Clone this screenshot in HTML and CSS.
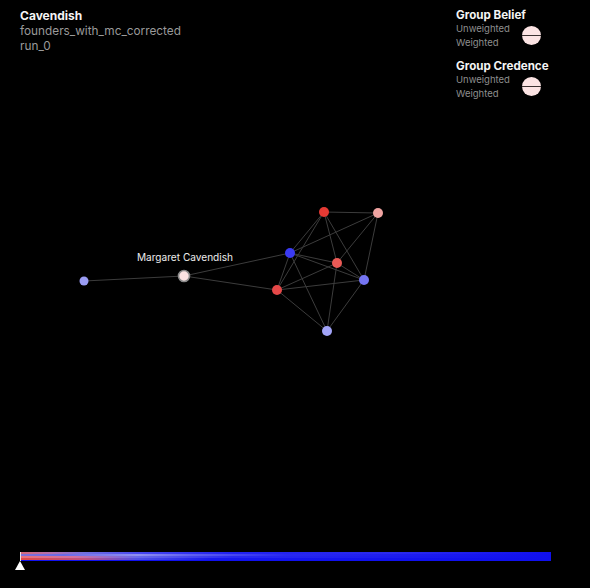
FILE: index.html
```html
<!DOCTYPE html>
<html>
<head>
<meta charset="utf-8">
<link rel="stylesheet" href="styles.css">
</head>
<body>
<div class="page">
  <header class="header">
    <div class="title">
      <div class="name">Cavendish</div>
      <div class="sub">founders_with_mc_corrected</div>
      <div class="sub">run_0</div>
    </div>
    <div class="legend">
      <div class="group">
        <div class="gtitle">Group Belief</div>
        <div class="grow">
          <div class="labels"><div>Unweighted</div><div>Weighted</div></div>
          <div class="pie"></div>
        </div>
      </div>
      <div class="group">
        <div class="gtitle">Group Credence</div>
        <div class="grow">
          <div class="labels"><div>Unweighted</div><div>Weighted</div></div>
          <div class="pie"></div>
        </div>
      </div>
    </div>
  </header>
  <svg class="graph" width="590" height="440" viewBox="0 104 590 440">
    <g class="edges">
      <line x1="184" y1="276" x2="84" y2="281"/>
      <line x1="184" y1="276" x2="290" y2="253"/>
      <line x1="184" y1="276" x2="277" y2="290"/>
      <line x1="324" y1="212" x2="378" y2="213"/>
      <line x1="324" y1="212" x2="290" y2="253"/>
      <line x1="324" y1="212" x2="277" y2="290"/>
      <line x1="324" y1="212" x2="337" y2="263"/>
      <line x1="324" y1="212" x2="364" y2="280"/>
      <line x1="378" y1="213" x2="290" y2="253"/>
      <line x1="378" y1="213" x2="337" y2="263"/>
      <line x1="378" y1="213" x2="364" y2="280"/>
      <line x1="290" y1="253" x2="337" y2="263"/>
      <line x1="290" y1="253" x2="364" y2="280"/>
      <line x1="290" y1="253" x2="277" y2="290"/>
      <line x1="290" y1="253" x2="327" y2="331"/>
      <line x1="337" y1="263" x2="277" y2="290"/>
      <line x1="337" y1="263" x2="364" y2="280"/>
      <line x1="337" y1="263" x2="327" y2="331"/>
      <line x1="277" y1="290" x2="364" y2="280"/>
      <line x1="277" y1="290" x2="327" y2="331"/>
      <line x1="364" y1="280" x2="327" y2="331"/>
    </g>
    <circle cx="84" cy="281" r="4.5" fill="#9a9cf4"/>
    <circle cx="324" cy="212" r="5" fill="#e53a34"/>
    <circle cx="378" cy="213" r="5" fill="#f0a4a2"/>
    <circle cx="290" cy="253" r="5" fill="#3a3af2"/>
    <circle cx="337" cy="263" r="5" fill="#ea5a56"/>
    <circle cx="364" cy="280" r="5" fill="#7474f2"/>
    <circle cx="277" cy="290" r="5" fill="#e54848"/>
    <circle cx="327" cy="331" r="5" fill="#a2a4f8"/>
    <circle cx="184" cy="276" r="5.5" fill="#fbe2e2" stroke="#8a8a8a" stroke-width="1.6"/>
    <text class="label" x="185" y="261" text-anchor="middle">Margaret Cavendish</text>
  </svg>
  <div class="timeline">
    <div class="bar">
      <div class="strip s1"></div>
      <div class="strip s2"></div>
      <div class="strip s3"></div>
      <div class="strip s4"></div>
    </div>
    <div class="marker"></div>
  </div>
</div>
</body>
</html>
```
FILE: styles.css
```css
html, body {
  margin: 0;
  padding: 0;
  background: #000;
}
.page {
  width: 590px;
  height: 588px;
  background: #000;
  font-family: Inter, "Noto Sans", sans-serif;
  color: #fff;
  display: flex;
  flex-direction: column;
  overflow: hidden;
}
.header {
  height: 104px;
  display: flex;
  justify-content: space-between;
  padding: 8px 0 0 20px;
  box-sizing: border-box;
}
.title .name {
  font-size: 12px;
  font-weight: 700;
  line-height: 15px;
  color: #f4f4f4;
}
.title .sub {
  font-size: 11.8px;
  line-height: 15px;
  color: #9a9a9a;
}
.title .name + .sub {
  margin-top: 1px;
}
.legend {
  width: 134px;
  display: flex;
  flex-direction: column;
  gap: 10px;
}
.gtitle {
  font-size: 11.6px;
  font-weight: 700;
  line-height: 14px;
  color: #f4f4f4;
}
.grow {
  display: flex;
  align-items: center;
}
.labels {
  width: 66px;
  font-size: 9.5px;
  line-height: 13.5px;
  color: #8e8e8e;
}
.pie {
  width: 19px;
  height: 19px;
  border-radius: 50%;
  background: linear-gradient(#fbe3e3 0, #fbe3e3 calc(50% - 0.7px), #3a3030 calc(50% - 0.7px), #3a3030 calc(50% + 0.7px), #fbe3e3 calc(50% + 0.7px));
  margin-top: -1px;
}
.graph {
  display: block;
  flex: none;
}
.edges line {
  stroke: #3c3c3c;
  stroke-width: 1;
}
.label {
  font-family: Inter, "Noto Sans", sans-serif;
  font-size: 10.1px;
  fill: #ececec;
}
.timeline {
  padding: 8px 0 0 20px;
  display: flex;
  flex-direction: column;
}
.bar {
  width: 531px;
  height: 9px;
  background: #1010ee;
  display: flex;
  flex-direction: column;
  border-left: 1px solid #e8e0e8;
  box-sizing: border-box;
}
.strip {
  height: 2px;
}
.s1 {
  background: linear-gradient(90deg, #d46878 0, #b070b0 6%, #7070e0 12%, #4848f0 22%, #2020f0 40%, #2a2af0 70%, #1010ee 100%);
}
.s2 {
  background: linear-gradient(90deg, #8070d8 0, #6a6ae8 8%, #9090f0 22%, #6060f0 32%, #2828f0 50%, #1010ee 100%);
}
.s3 {
  background: linear-gradient(90deg, #e8707a 0, #d070a0 10%, #6868ea 22%, #2828f0 40%, #1010ee 100%);
}
.s4 {
  background: linear-gradient(90deg, #e04848 0, #c05080 12%, #5050e8 22%, #1818f0 36%, #1010ee 100%);
}
.marker {
  width: 0;
  height: 0;
  border-left: 5px solid transparent;
  border-right: 5px solid transparent;
  border-bottom: 9px solid #fff;
  margin-left: -5px;
}
```
